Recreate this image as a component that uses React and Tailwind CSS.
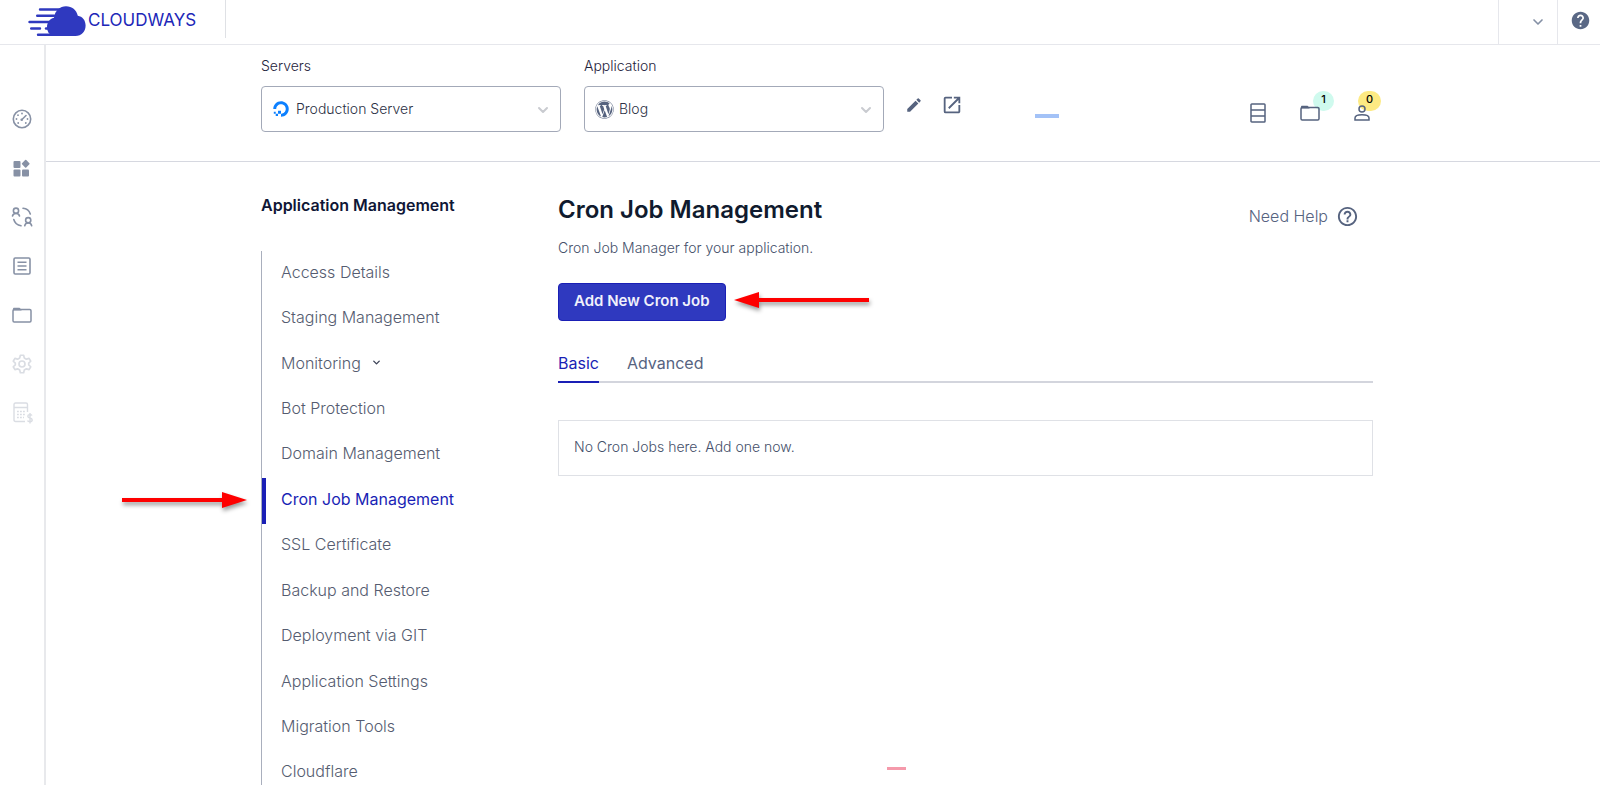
import { useState } from 'react';
import { MdEdit, MdOpenInNew, MdHelp, MdHelpOutline } from 'react-icons/md';
import { FaDigitalOcean, FaWordpress } from 'react-icons/fa';
import { ChevronDown } from 'lucide-react';

const MENU = [
  'Access Details',
  'Staging Management',
  'Monitoring',
  'Bot Protection',
  'Domain Management',
  'Cron Job Management',
  'SSL Certificate',
  'Backup and Restore',
  'Deployment via GIT',
  'Application Settings',
  'Migration Tools',
  'Cloudflare',
];

const RAIL = [
  { label: 'Dashboard', icon: GaugeIcon },
  { label: 'Apps', icon: WidgetsIcon },
  { label: 'Team', icon: TeamIcon },
  { label: 'Servers', icon: ListIcon },
  { label: 'Projects', icon: FolderIcon },
  { label: 'Settings', icon: GearIcon, muted: true },
  { label: 'Billing', icon: BillingIcon, muted: true },
];

function Logo() {
  return (
    <svg width="58" height="32" viewBox="0 0 58 32" aria-hidden="true">
      <g stroke="#2f39bf" strokeWidth="2.4" strokeLinecap="round">
        <path d="M12 4.500H32M9.200 10.700H26M1.500 17H22M3.200 23.500H12M10 29.800H46" />
        <path d="M18 23.500H22" />
      </g>
      <path
        fill="#2f39bf"
        d="M25 31C21 29.500 19 26.500 19 22C19 17.500 21.500 14 26 12.700C27 5.500 32 1.300 38 1.300C44 1.300 48.500 5 49.800 10.800C54.500 11.500 57.600 15.500 57.600 20.500C57.600 26.500 53.500 31 47.500 31Z"
      />
    </svg>
  );
}

function GaugeIcon() {
  return (
    <svg width="20" height="20" viewBox="0 0 20 20" fill="none" stroke="currentColor">
      <circle cx="10" cy="10" r="8.700" strokeWidth="1.600" />
      <path d="M10 10.500L14 6.500" strokeWidth="1.600" strokeLinecap="round" />
      <circle cx="9.700" cy="10.800" r="1.300" fill="currentColor" stroke="none" />
      <g fill="currentColor" stroke="none">
        <circle cx="10" cy="4.500" r=".9" />
        <circle cx="6" cy="6.200" r=".9" />
        <circle cx="4.500" cy="10" r=".9" />
        <circle cx="6.200" cy="14" r=".9" />
        <circle cx="13.800" cy="14" r=".9" />
        <circle cx="15.500" cy="10" r=".9" />
      </g>
    </svg>
  );
}

function WidgetsIcon() {
  return (
    <svg width="20" height="20" viewBox="0 0 20 20" fill="currentColor">
      <rect x="1.500" y="3" width="7" height="7" rx="1" />
      <rect x="1.500" y="11.500" width="7" height="7" rx="1" />
      <rect x="10" y="11.500" width="7" height="7" rx="1" />
      <rect x="10.700" y="2.700" width="6" height="6" rx=".8" transform="rotate(45 13.700 5.700)" />
    </svg>
  );
}

function TeamIcon() {
  return (
    <svg width="22" height="20" viewBox="0 0 22 20" fill="none" stroke="currentColor" strokeWidth="1.600" strokeLinecap="round">
      <circle cx="5" cy="3.700" r="2.600" />
      <path d="M1.500 9C1.800 7.300 3 6.500 5 6.500S8.200 7.300 8.500 9" />
      <circle cx="17.200" cy="13.200" r="2.600" />
      <path d="M13.700 18.800C14 17 15.200 16 17.200 16S20.400 17 20.700 18.800" />
      <path d="M12 1.200C15.500 1.500 18.300 3.800 19.300 7" />
      <path d="M2.800 12.500C3.700 15.800 6.500 18.300 10 18.800" />
    </svg>
  );
}

function ListIcon() {
  return (
    <svg width="20" height="20" viewBox="0 0 20 20" fill="none" stroke="currentColor" strokeWidth="1.600">
      <rect x="2" y="2" width="16" height="16" rx="1.200" />
      <path d="M5.500 6.300H14.500M5.500 10H14.500M5.500 13.700H14.500" />
    </svg>
  );
}

function FolderIcon() {
  return (
    <svg width="20" height="16" viewBox="0 0 20 16" fill="none" stroke="currentColor" strokeWidth="1.500">
      <rect x="1" y="2.500" width="18" height="12.500" rx="1.200" />
      <path d="M1 3V1.500Q1 .7 1.800 .7H7.500L9.500 2.800V3.500H1Z" fill="currentColor" stroke="none" />
    </svg>
  );
}

function GearIcon() {
  return (
    <svg width="20" height="20" viewBox="0 0 24 24" fill="none" stroke="currentColor" strokeWidth="2" strokeLinejoin="round">
      <path d="M10 1.500H14L14.700 4.700L17.300 6.200L20.500 5.200L22.500 8.700L20 11V13L22.500 15.300L20.500 18.800L17.300 17.800L14.700 19.300L14 22.500H10L9.300 19.300L6.700 17.800L3.500 18.800L1.500 15.300L4 13V11L1.500 8.700L3.500 5.200L6.700 6.200L9.300 4.700Z" />
      <circle cx="12" cy="12" r="3.600" />
    </svg>
  );
}

function BillingIcon() {
  return (
    <svg width="22" height="22" viewBox="-2 0 22 22" fill="none" stroke="currentColor" strokeWidth="1.400">
      <path d="M12 19.500H2.500Q1 19.500 1 18V2.500Q1 1 2.500 1H13Q14.500 1 14.500 2.500V10M1 5.500H14.500" />
      <path d="M4 9.500H12M4 12.500H12M4 15.500H11" strokeDasharray="1.800 1.200" />
      <path d="M19 13.500C18.500 12.400 14.800 12 14.800 14.200C14.800 16.500 19.200 15.400 19.200 18C19.200 20.200 15 20 14.600 18.500M17 11V21.500" />
    </svg>
  );
}

function ServerIcon() {
  return (
    <svg width="16" height="20" viewBox="0 0 16 20" fill="none" stroke="currentColor" strokeWidth="1.500">
      <rect x="1" y="1" width="14" height="18" rx=".8" />
      <path d="M1 7H15M1 13H15" />
    </svg>
  );
}

function PersonIcon() {
  return (
    <svg width="16" height="16" viewBox="0 0 16 16" fill="none" stroke="currentColor" strokeWidth="1.500">
      <circle cx="8" cy="4" r="3" />
      <path d="M1 15V13C1 11 4 9.800 8 9.800S15 11 15 13V15Z" />
    </svg>
  );
}

function Arrow({ flip, width }) {
  return (
    <svg width={width} height="24" className="overflow-visible drop-shadow-[1px_3px_2px_rgba(0,0,0,0.4)]" aria-hidden="true">
      <g fill="#fe0000" transform={flip ? `translate(${width} 0) scale(-1 1)` : undefined}>
        <rect x="0" y="10" width={width - 24} height="4" />
        <path d={`M${width - 25} 4L${width} 12L${width - 25} 20Z`} />
      </g>
    </svg>
  );
}

function Picker({ id, label, icon, value }) {
  return (
    <div className="w-[300px]">
      <label htmlFor={id} className="block text-[14px] leading-5 font-light text-[#1f243c]">{label}</label>
      <div className="relative mt-[10px]">
        <span className="absolute left-[10px] top-0 flex h-[46px] w-5 items-center justify-center pointer-events-none">{icon}</span>
        <select
          id={id}
          className="block h-[46px] w-full appearance-none rounded border border-[#a3a9b8] bg-transparent pb-0.5 pl-[34px] pr-8 text-[14px] font-light text-[#2c3145] outline-none"
        >
          <option>{value}</option>
        </select>
        <ChevronDown size={16} strokeWidth={3} className="absolute right-[10px] top-4 text-[#c9cbd0] pointer-events-none" />
      </div>
    </div>
  );
}

export default function App() {
  const [active, setActive] = useState('Cron Job Management');
  const [tab, setTab] = useState('Basic');

  return (
    <div className="flex h-screen flex-col overflow-hidden bg-white font-['Inter','Liberation_Sans',sans-serif] text-[#45506a]">
      {/* Top bar */}
      <header className="flex h-[45px] shrink-0 items-stretch border-b border-[#e6e7ec]">
        <a href="#" className="flex h-[38px] w-[226px] items-center border-r border-[#dfe1e5] pl-7 pt-1 text-[17px] text-[#2026b8]">
          <Logo />
          <span className="pl-[2px]">CLOUDWAYS</span>
        </a>
        <div className="ml-auto flex">
          <button aria-label="Account" className="flex w-[59px] items-center justify-end border-l border-[#e6e7ec] pr-[11px]">
            <ChevronDown size={16} strokeWidth={2.5} className="text-[#8490a5]" />
          </button>
          <button aria-label="Help" className="flex w-[43px] items-center justify-end border-l border-[#e6e7ec] pb-1 pr-[9px]">
            <MdHelp size={21} className="text-[#5a6885]" />
          </button>
        </div>
      </header>

      <div className="flex min-h-0 flex-1">
        {/* Icon rail */}
        <nav className="flex w-[46px] shrink-0 flex-col border-r-2 border-[#e8e9ec] pt-[49px] text-[#8791a5]">
          {RAIL.map(({ label, icon: Icon, muted }) => (
            <a
              key={label}
              href="#"
              aria-label={label}
              className={muted ? 'flex h-[49px] items-center justify-center text-[#dadde3]' : 'flex h-[49px] items-center justify-center'}
            >
              <Icon />
            </a>
          ))}
        </nav>

        <main className="min-w-0 flex-1 overflow-y-auto [scrollbar-width:none]">
          {/* Server and application pickers */}
          <section className="border-b border-[#d6d8e0] pr-3">
            <div className="mx-auto flex h-[116px] max-w-[1112px] items-start pt-[11px]">
              <div className="flex gap-[23px]">
                <Picker id="server" label="Servers" value="Production Server" icon={<FaDigitalOcean size={16} className="text-[#0c80ff]" />} />
                <Picker id="app" label="Application" value="Blog" icon={<FaWordpress size={19} className="text-[#56637f]" />} />
              </div>
              <div className="flex items-center gap-[18px] pl-[21px] pt-9 text-[#56637f]">
                <button aria-label="Rename"><MdEdit size={18} /></button>
                <button aria-label="Open application"><MdOpenInNew size={22} /></button>
                <span className="ml-[54px] mt-[22px] h-1 w-6 bg-[#a3c2f7]" />
              </div>
              <div className="ml-auto flex items-center gap-[34px] pr-[3px] pt-[47px] text-[#56637f]">
                <button aria-label="Servers"><ServerIcon /></button>
                <button aria-label="Projects" className="relative">
                  <span className="absolute -right-[14px] -top-[14px] h-5 w-[21px] rounded-full bg-[#cffaee] text-center text-[11px] leading-4 font-medium text-black">1</span>
                  <span className="relative"><FolderIcon /></span>
                </button>
                <button aria-label="Members" className="relative">
                  <span className="absolute -right-[11px] -top-[14px] h-5 w-[23px] rounded-full bg-[#fdea83] text-center text-[11px] leading-4 font-medium text-black">0</span>
                  <span className="relative"><PersonIcon /></span>
                </button>
              </div>
            </div>
          </section>

          <div className="pr-3">
            <div className="mx-auto flex max-w-[1112px]">
              <aside className="w-[297px] shrink-0 pt-[31px]">
                <h2 className="text-[16px] leading-6 font-semibold text-[#0f1636]">Application Management</h2>
                <ul className="mt-[34px] flex min-h-[545px] flex-col border-l border-[#a9afbd]">
                  {MENU.map(item => (
                    <li key={item} className="relative flex flex-1">
                      <a
                        href="#"
                        onClick={() => setActive(item)}
                        className={
                          item === active
                            ? 'flex flex-1 items-center border-l-4 border-[#1a1fb5] pb-1 pl-[15px] text-[16px] text-[#1a1fb5]'
                            : 'flex flex-1 items-center pb-1 pl-[19px] text-[16px] font-light text-[#555c70]'
                        }
                      >
                        {item}
                        {item === 'Monitoring' && <ChevronDown size={11} strokeWidth={3} className="ml-[10px] text-[#3c4357]" />}
                      </a>
                      {item === 'Cron Job Management' && (
                        <span className="absolute right-full top-0 mr-[15px] flex h-full items-center pb-0.5">
                          <Arrow width={125} />
                        </span>
                      )}
                    </li>
                  ))}
                </ul>
              </aside>

              <div className="min-w-0 flex-1">
                <div className="flex items-start justify-between">
                  <h1 className="pt-8 text-[24px] leading-8 font-semibold text-[#101b2e]">Cron Job Management</h1>
                  <a href="#" className="flex items-center gap-2 pr-[14px] pt-[42px] text-[16px] leading-6 font-light text-[#56637f]">
                    Need Help
                    <MdHelpOutline size={23} className="text-[#56637f]" />
                  </a>
                </div>
                <p className="mt-[10px] text-[14px] leading-5 font-light">Cron Job Manager for your application.</p>
                <div className="mt-[25px] flex items-center">
                  <button className="h-[38px] rounded border border-[#1a1fb5] bg-[#2f39bf] px-[15px] pb-0.5 text-[15px] font-semibold text-[#f1f1fb]">Add New Cron Job</button>
                  <span className="ml-2 pb-1"><Arrow width={135} flip /></span>
                </div>
                <div role="tablist" className="mt-[30px] flex gap-7 border-b-2 border-[#d3d5dd]">
                  {['Basic', 'Advanced'].map(name => (
                    <button
                      key={name}
                      role="tab"
                      aria-selected={tab === name}
                      onClick={() => setTab(name)}
                      className={
                        tab === name
                          ? '-mb-[2px] border-b-2 border-[#1a1fb5] pb-[6px] text-[16px] leading-6 text-[#1a1fb5]'
                          : '-mb-[2px] border-b-2 border-transparent pb-[6px] text-[16px] leading-6 text-[#56637f]'
                      }
                    >
                      {name}
                    </button>
                  ))}
                </div>
                <div className="mt-[37px] border border-[#dfe1e6] px-[15px] pt-4 pb-[18px] text-[14px] leading-5 font-light">No Cron Jobs here. Add one now.</div>
              </div>
            </div>
          </div>
        </main>
      </div>
      <span className="fixed bottom-[15px] left-[887px] h-[3px] w-[19px] bg-[#f59aab]" />
    </div>
  );
}
